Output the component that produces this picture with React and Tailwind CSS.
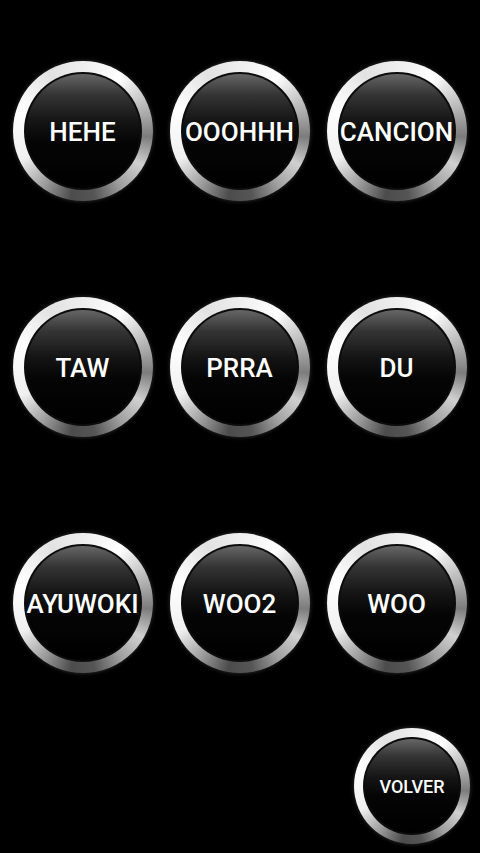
import React from "react";

const labels = ["HEHE", "OOOHHH", "CANCION", "TAW", "PRRA", "DU", "AYUWOKI", "WOO2", "WOO"];

function RoundButton({ label, big = true }) {
  return (
    <div
      className={
        (big ? "w-[140px] h-[140px] p-[11px] " : "w-[116px] h-[116px] p-[9px] ") +
        "rounded-full bg-[conic-gradient(from_0deg,#eeeeee_0deg,#ffffff_35deg,#b0b0b0_72deg,#7c7c7c_95deg,#d0d0d0_120deg,#a0a0a0_145deg,#555555_170deg,#4c4c4c_190deg,#9a9a9a_215deg,#f0f0f0_245deg,#ffffff_290deg,#e2e2e2_330deg,#eeeeee_360deg)] shadow-[0_0_4px_rgba(255,255,255,0.2)]"
      }
    >
      <div className="w-full h-full rounded-full p-[2px] bg-[#0c0c0c]">
        <div className="w-full h-full rounded-full bg-[linear-gradient(to_bottom,#666666_0%,#353535_18%,#141414_42%,#050505_60%,#000000_100%)] flex items-center justify-center">
          <span
            className={
              (big ? "text-[26px] " : "text-[18px] ") +
              "text-white font-medium whitespace-nowrap leading-none translate-y-[1px]"
            }
            style={{ fontFamily: "Roboto, 'Liberation Sans', sans-serif" }}
          >
            {label}
          </span>
        </div>
      </div>
    </div>
  );
}

export default function App() {
  return (
    <div className="w-[480px] h-[853px] bg-black overflow-hidden pt-[13px]">
      <div className="grid grid-cols-[157px_157px_157px] auto-rows-[236px] pl-[4px]">
        {labels.map((l) => (
          <div key={l} className="flex items-center justify-center">
            <RoundButton label={l} />
          </div>
        ))}
      </div>
      <div className="flex justify-end pr-[10px] mt-[7px]">
        <RoundButton label="VOLVER" big={false} />
      </div>
    </div>
  );
}
